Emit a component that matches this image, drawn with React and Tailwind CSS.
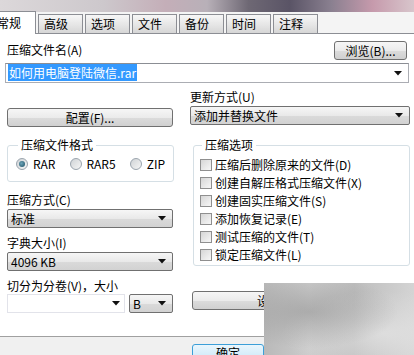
import React from 'react';

const tabs = ['高级', '选项', '文件', '备份', '时间', '注释'];
const options = [
  '压缩后删除原来的文件(D)',
  '创建自解压格式压缩文件(X)',
  '创建固实压缩文件(S)',
  '添加恢复记录(E)',
  '测试压缩的文件(T)',
  '锁定压缩文件(L)',
];

function Arrow() {
  return (
    <svg width="8" height="5" viewBox="0 0 8 5" className="shrink-0">
      <path d="M0 0H8L4 4.5Z" fill="#111" />
    </svg>
  );
}

function Select({ value, className = '' }) {
  return (
    <div
      className={`h-[19px] flex items-center border border-[#707070] rounded-[2px] bg-[linear-gradient(#f6f6f6,#e9e9e9_50%,#dadada_51%,#d2d2d2)] pl-[3px] pr-[6px] leading-[17px] ${className}`}
    >
      <span className="flex-1 whitespace-nowrap overflow-hidden">{value}</span>
      <Arrow />
    </div>
  );
}

function Btn({ children, className = '' }) {
  return (
    <div
      className={`h-[19px] flex items-center justify-center border border-[#707070] rounded-[3px] bg-[linear-gradient(#f6f6f6,#ebebeb_50%,#dcdcdc_51%,#d0d0d0)] leading-[17px] ${className}`}
    >
      {children}
    </div>
  );
}

function Radio({ checked, label }) {
  return (
    <div className="flex items-center gap-[5px]">
      <div className="w-[12px] h-[12px] rounded-full border border-[#9aa4ad] bg-[linear-gradient(135deg,#cfd3d6,#f6f6f6)] flex items-center justify-center">
        {checked && <div className="w-[6px] h-[6px] rounded-full bg-[radial-gradient(circle_at_40%_40%,#6ca4b8,#1d4f63)]" />}
      </div>
      <span>{label}</span>
    </div>
  );
}

function Check({ label }) {
  return (
    <div className="h-[18px] flex items-center gap-[3px]">
      <div className="w-[12px] h-[12px] border border-[#8f8f8f] bg-[linear-gradient(135deg,#d6d6d6,#f7f7f7)]" />
      <span>{label}</span>
    </div>
  );
}

export default function App() {
  return (
    <div className="w-[414px] h-[355px] relative overflow-hidden bg-white flex flex-col text-[12px] leading-[14px] text-black font-['Noto_Sans_CJK_SC','Noto_Sans',sans-serif]">
      {/* window behind */}
      <div className="h-[12px] shrink-0 bg-[linear-gradient(90deg,#dcd8da_0%,#cdc8cc_25%,#c4aeb8_40%,#b8b0b8_50%,#6e6874_60%,#5a5466_70%,#8a8090_80%,#c69aac_90%,#d8c6cc_100%)]" />

      {/* tabs */}
      <div className="h-[22px] shrink-0 flex items-end border-b border-[#8c8e94] bg-[#f4f4f4]">
        <div className="w-[36px] h-[23px] -mb-px bg-white border-r border-t border-[#8c8e94] flex items-center overflow-hidden">
          <span className="-ml-[3px] whitespace-nowrap">常规</span>
        </div>
        {tabs.map((t) => (
          <div
            key={t}
            className="w-[45px] h-[19px] ml-[2px] border border-b-0 border-[#8c8e94] bg-[linear-gradient(#f7f7f7,#e4e4e4_60%,#d6d6d6)] flex items-center pl-[5px]"
          >
            {t}
          </div>
        ))}
      </div>

      {/* body */}
      <div className="flex-1 px-[7px]">
        <div className="mt-[7px] h-[18px] flex items-center justify-between">
          <span>压缩文件名(A)</span>
          <Btn className="w-[73px] h-[18px]">浏览(B)...</Btn>
        </div>

        <div className="mt-[4px] -mx-[2px] h-[20px] border border-[#abadb3] border-t-[#8b8e94] flex items-center pl-[2px] pr-[6px] leading-[16px]">
          <div className="flex-1">
            <span className="bg-[#3399ff] text-white px-[1px]">如何用电脑登陆微信.rar</span>
          </div>
          <Arrow />
        </div>

        <div className="mt-[7px] flex">
          <div className="w-[166px] pt-[18px]">
            <Btn>配置(F)...</Btn>
          </div>
          <div className="flex-1 ml-[17px] -mr-[3px]">
            <div className="h-[14px]">更新方式(U)</div>
            <Select className="mt-[2px]" value="添加并替换文件" />
          </div>
        </div>

        <div className="mt-[11px] flex">
          <div className="w-[166px]">
            <fieldset className="h-[44px] border border-[#d5dfe5] rounded-[3px] px-[8px]">
              <legend className="px-[3px] ml-[2px]">压缩文件格式</legend>
              <div className="mt-[5px] flex gap-[14px]">
                <Radio checked label="RAR" />
                <Radio label="RAR5" />
                <Radio label="ZIP" />
              </div>
            </fieldset>
            <div className="mt-[11px] h-[14px]">压缩方式(C)</div>
            <Select className="mt-[2px]" value="标准" />
            <div className="mt-[8px] h-[14px]">字典大小(I)</div>
            <Select className="mt-[2px]" value="4096 KB" />
            <div className="mt-[8px] h-[14px]">切分为分卷(V)，大小</div>
            <div className="mt-[1px] flex gap-[4px]">
              <div className="w-[118px] h-[19px] border border-[#e2e3ea] flex items-center justify-end pr-[4px]">
                <Arrow />
              </div>
              <Select className="flex-1" value="B" />
            </div>
          </div>
          <div className="flex-1 ml-[20px] -mr-[3px]">
            <fieldset className="h-[128px] border border-[#d5dfe5] rounded-[3px] pl-[6px]">
              <legend className="px-[3px] ml-[2px]">压缩选项</legend>
              <div className="mt-[4px]">
                {options.map((o) => (
                  <Check key={o} label={o} />
                ))}
              </div>
            </fieldset>
            <Btn className="mt-[25px] -ml-[1px] w-[200px] justify-start pl-[64px]">设置(V)...</Btn>
          </div>
        </div>
      </div>

      {/* bottom bar */}
      <div className="h-[19px] shrink-0 border-t border-[#a0a0a0] bg-[#f0f0f0] pl-[192px] pt-[7px]">
        <div className="w-[72px] h-[20px] border border-[#3c9fd8] rounded-[3px] bg-[linear-gradient(#eaf6fd,#c4e5f6)] flex justify-center pt-[1px]">
          确定
        </div>
      </div>

      {/* blurred watermark region */}
      <div className="absolute left-[264px] top-[283px] w-[150px] h-[72px] bg-[linear-gradient(90deg,#b9b9b9,#cbcbcb_30%,#bdbdbd_60%,#d4d4d4)]">
        <div className="w-full h-full bg-[radial-gradient(ellipse_at_30%_40%,rgba(150,150,150,0.6),transparent_60%),radial-gradient(ellipse_at_80%_70%,rgba(230,230,230,0.7),transparent_60%)]" />
      </div>
    </div>
  );
}
